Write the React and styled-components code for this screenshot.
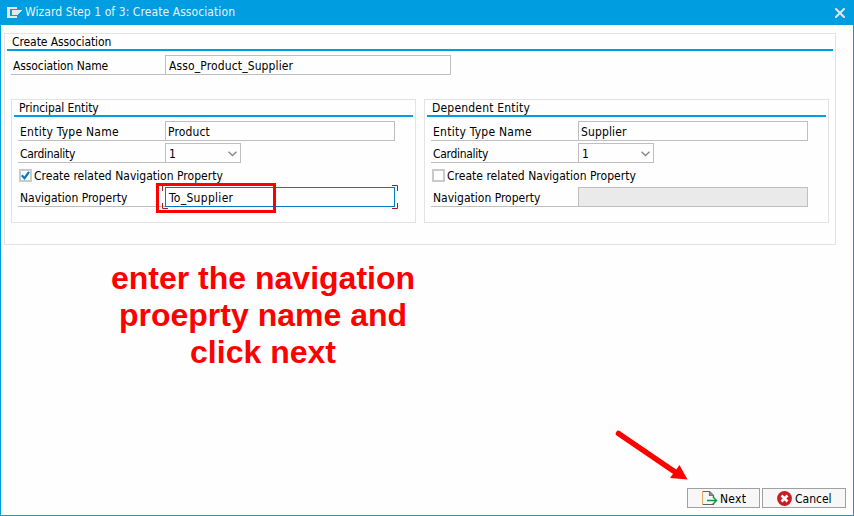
import React from "react";
import styled, { createGlobalStyle } from "styled-components";

const GlobalStyle = createGlobalStyle`
  *, *::before, *::after { box-sizing: border-box; }
  html, body { margin: 0; padding: 0; }
  body { overflow: hidden; background: #fefefe; }
`;

const Dialog = styled.div`
  position: relative;
  display: flex;
  flex-direction: column;
  width: 854px;
  height: 516px;
  background: #fefefe;
  border: 1px solid #009de0;
  border-top: 0;
  color: #000;
  font-family: "DejaVu Sans Condensed", "DejaVu Sans", sans-serif;
  font-stretch: condensed;
  font-size: 12px;
  line-height: 16px;
  white-space: nowrap;
`;

const TitleBar = styled.header`
  display: flex;
  align-items: center;
  flex: 0 0 25px;
  padding: 0 8px 0 6px;
  background: #009de0;
  color: #e6f3fa;
`;

const Title = styled.span`
  flex: 1;
  margin-left: 3px;
  padding-bottom: 1px;
`;

const Text = styled.span`
  letter-spacing: ${(p) => p.$spacing || 0}px;
`;

const Group = styled.section`
  width: ${(p) => p.$width}px;
  height: ${(p) => p.$height}px;
  padding: 0 2px;
  border: 1px solid #e3e3e3;
`;

const GroupTitle = styled.h2`
  height: 17px;
  margin: 0;
  padding: 0 0 0 5px;
  border-bottom: 2px solid #009de0;
  font-size: 12px;
  font-weight: 400;
  line-height: 17px;
`;

const Rows = styled.div`
  display: flex;
  flex-direction: column;
  gap: 2px;
  padding: 4px 0 0 4px;
`;

const Row = styled.div`
  display: flex;
  height: 20px;
`;

const Label = styled.label`
  width: ${(p) => p.$width}px;
  padding: 3px 0 0 2px;
  border-bottom: 1px solid #bfbfbf;
`;

const Field = styled.div`
  display: flex;
  align-items: center;
  justify-content: space-between;
  width: ${(p) => p.$width}px;
  padding: 1px 3px 0 ${(p) => p.$inset || 2}px;
  border: 1px solid ${(p) => (p.$focused ? "#007cc0" : "#bfbfbf")};
  background: ${(p) => (p.$disabled ? "#eaeaea" : "#fefefe")};
  letter-spacing: ${(p) => (p.$focused ? 0.3 : 0.13)}px;
`;

const CheckRow = styled.div`
  display: flex;
  align-items: center;
  height: 20px;
  padding: 1px 0 0 1px;
  gap: 2px;
`;

const CheckBox = styled.span`
  display: block;
  width: 13px;
  height: 13px;
  border: 2px solid #cacaca;
  svg { display: block; overflow: visible; }
`;

const Columns = styled.div`
  display: flex;
  gap: 8px;
  margin: 24px 0 0 4px;
`;

const Content = styled.main`
  flex: 1;
  padding: 8px 0 0 3px;
`;

const Footer = styled.footer`
  display: flex;
  justify-content: flex-end;
  gap: 2px;
  padding: 0 7px 7px 0;
`;

const Button = styled.button`
  display: flex;
  align-items: center;
  gap: ${(p) => p.$gap}px;
  width: ${(p) => p.$width}px;
  height: 20px;
  padding: 1px 0 0 ${(p) => p.$pad}px;
  border: 1px solid #a0a0a0;
  background: #f7f7f7;
  color: #000;
  font: inherit;
  svg { flex: none; margin-top: -1px; }
`;

const FocusCorners = styled.svg`
  position: absolute;
  left: 161px;
  top: 185px;
`;

const Highlight = styled.div`
  position: absolute;
  left: 155px;
  top: 183px;
  width: 120px;
  height: 30px;
  border: 3px solid #fe0000;
`;

const Note = styled.p`
  position: absolute;
  left: 100px;
  top: 260px;
  width: 324px;
  margin: 0;
  color: #fe0000;
  font: bold 32px/37px "Liberation Sans", Arial, sans-serif;
  text-align: center;
`;

const Arrow = styled.svg`
  position: absolute;
  left: 608px;
  top: 425px;
`;

const WindowIcon = () => (
  <svg width="15" height="12" viewBox="0 0 15 12" shapeRendering="crispEdges">
    <path d="M0 0H10V2H3V9H10V11H0Z" fill="#e6e6e6" />
    <path d="M5 3H15L10 8H5Z" fill="#e6e6e6" />
  </svg>
);

const CloseIcon = () => (
  <svg width="10" height="10" viewBox="0 0 10 10">
    <path d="M1 1L9 9M9 1L1 9" stroke="#e6e6e6" strokeWidth="2" strokeLinecap="square" />
  </svg>
);

const Chevron = () => (
  <svg width="9" height="6" viewBox="0 0 9 6">
    <path d="M.5 .7L4.5 4.5L8.5 .7" fill="none" stroke="#858585" strokeWidth="1.3" />
  </svg>
);

const NextIcon = () => (
  <svg width="16" height="14" viewBox="0 0 16 14">
    <path d="M1 .5H7.5L11.5 4.5V6M1 13.5H11.5V12M7.5 .5V4.5H11.5" fill="none" stroke="#5c6060" strokeWidth="1.2" />
    <path d="M7.5 .5L11.5 4.5H7.5Z" fill="#8b8f8f" />
    <path d="M.5 0V14" stroke="#eda85c" />
    <path d="M5 9.5H14.5M10.8 5.8L14.5 9.5L10.8 13.2" fill="none" stroke="#10923f" strokeWidth="1.4" />
  </svg>
);

const CancelIcon = () => (
  <svg width="15" height="15" viewBox="0 0 15 15">
    <circle cx="7.5" cy="7.5" r="7.4" fill="#cc1b20" />
    <path d="M4.5 4.5L10.5 10.5M10.5 4.5L4.5 10.5" stroke="#fff" strokeWidth="2.6" />
  </svg>
);

const EntityGroup = ({ title, entity, navigation, checked }) => (
  <Group $width={405} $height={124}>
    <GroupTitle><Text $spacing={checked ? -0.08 : 0.2}>{title}</Text></GroupTitle>
    <Rows>
      <Row>
        <Label $width={147}><Text $spacing={0.25}>Entity Type Name</Text></Label>
        <Field $width={230}>{entity}</Field>
      </Row>
      <Row>
        <Label $width={147}><Text $spacing={-0.3}>Cardinality</Text></Label>
        <Field $width={76} $inset={3}>1<Chevron /></Field>
      </Row>
      <CheckRow>
        <CheckBox>
          {checked && (
            <svg width="9" height="9" viewBox="0 0 9 9">
              <path d="M.8 4.2L3.5 7.2L8 .8" fill="none" stroke="#007cc0" strokeWidth="2.2" />
            </svg>
          )}
        </CheckBox>
        <Text $spacing={0.02}>Create related Navigation Property</Text>
      </CheckRow>
      <Row>
        <Label $width={147}><Text>Navigation Property</Text></Label>
        <Field $width={230} $inset={3} $focused={checked} $disabled={!checked}>{navigation}</Field>
      </Row>
    </Rows>
  </Group>
);

export default function App() {
  return (
    <>
      <GlobalStyle />
      <Dialog>
        <TitleBar>
          <WindowIcon />
          <Title><Text $spacing={0.08}>Wizard Step 1 of 3: Create Association</Text></Title>
          <CloseIcon />
        </TitleBar>
        <Content>
          <Group $width={832} $height={212}>
            <GroupTitle><Text $spacing={-0.08}>Create Association</Text></GroupTitle>
            <Rows>
              <Row>
                <Label $width={154}><Text $spacing={-0.1}>Association Name</Text></Label>
                <Field $width={286} $inset={3}>Asso_Product_Supplier</Field>
              </Row>
            </Rows>
            <Columns>
              <EntityGroup title="Principal Entity" entity="Product" navigation="To_Supplier" checked />
              <EntityGroup title="Dependent Entity" entity="Supplier" />
            </Columns>
          </Group>
        </Content>
        <Footer>
          <Button $width={73} $pad={14} $gap={2}><NextIcon /><Text $spacing={0.25}>Next</Text></Button>
          <Button $width={84} $pad={14} $gap={3}><CancelIcon />Cancel</Button>
        </Footer>
        <FocusCorners width="236" height="24" viewBox="0 0 236 24">
          <path d="M6 .5H.5V6M.5 18V23.5H6M230 .5H235.5V6M235.5 18V23.5H230" fill="none" stroke="#a8191e" />
        </FocusCorners>
        <Highlight />
        <Note>enter the navigation<br />proeprty name and<br />click next</Note>
        <Arrow width="80" height="60" viewBox="0 0 80 60">
          <path d="M9.5 8.5L66 47" stroke="#fe0000" strokeWidth="5.5" strokeLinecap="round" />
          <path d="M78.5 54.5L70.5 40L61 53Z" fill="#fe0000" />
        </Arrow>
      </Dialog>
    </>
  );
}
